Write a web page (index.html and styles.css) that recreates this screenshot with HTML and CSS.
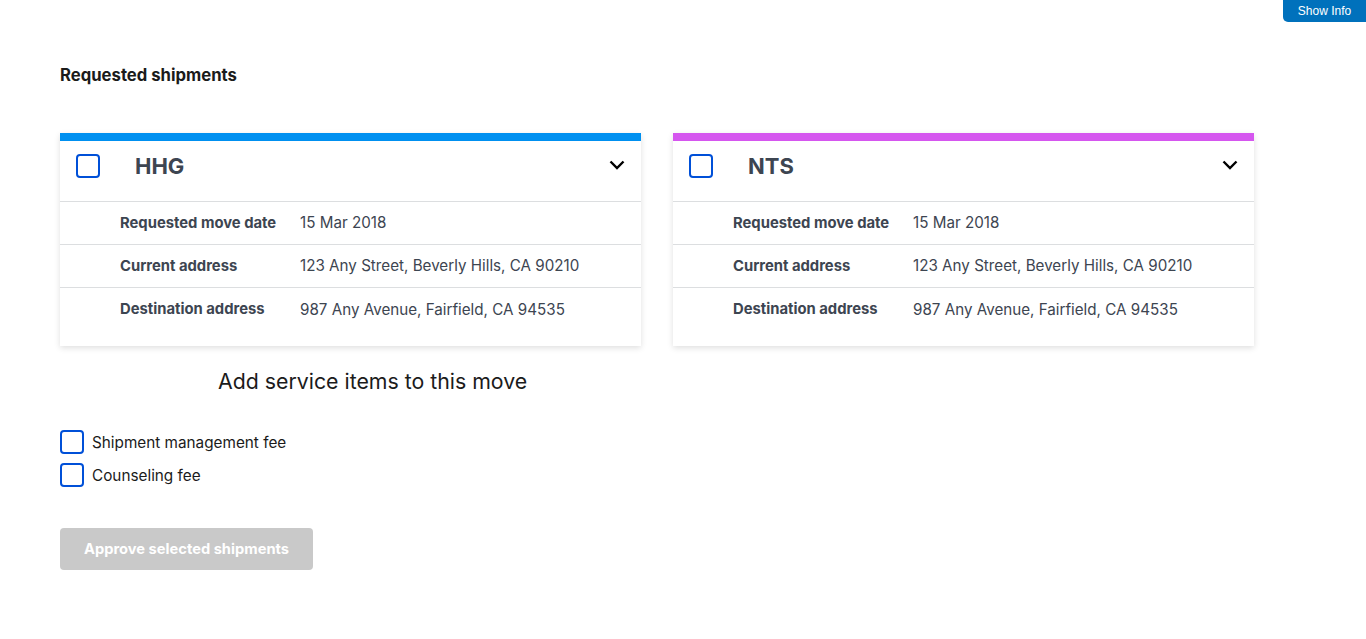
FILE: index.html
```html
<!DOCTYPE html>
<html>
<head>
<meta charset="utf-8">
<link rel="stylesheet" href="styles.css">
</head>
<body>
<button class="show-info">Show Info</button>
<main class="page">
  <h2 class="title">Requested shipments</h2>
  <div class="cards">
    <section class="card card-hhg">
      <div class="card-head">
        <span class="box"></span>
        <span class="card-name">HHG</span>
        <svg class="chev" width="16" height="10" viewBox="0 0 16 10"><path d="M1.5 1.5 L8 8 L14.5 1.5" fill="none" stroke="#000" stroke-width="2.4"/></svg>
      </div>
      <dl class="rows">
        <div class="row"><dt>Requested move date</dt><dd>15 Mar 2018</dd></div>
        <div class="row"><dt>Current address</dt><dd>123 Any Street, Beverly Hills, CA 90210</dd></div>
        <div class="row"><dt>Destination address</dt><dd>987 Any Avenue, Fairfield, CA 94535</dd></div>
      </dl>
    </section>
    <section class="card card-nts">
      <div class="card-head">
        <span class="box"></span>
        <span class="card-name">NTS</span>
        <svg class="chev" width="16" height="10" viewBox="0 0 16 10"><path d="M1.5 1.5 L8 8 L14.5 1.5" fill="none" stroke="#000" stroke-width="2.4"/></svg>
      </div>
      <dl class="rows">
        <div class="row"><dt>Requested move date</dt><dd>15 Mar 2018</dd></div>
        <div class="row"><dt>Current address</dt><dd>123 Any Street, Beverly Hills, CA 90210</dd></div>
        <div class="row"><dt>Destination address</dt><dd>987 Any Avenue, Fairfield, CA 94535</dd></div>
      </dl>
    </section>
  </div>
  <h3 class="sub">Add service items to this move</h3>
  <div class="checks">
    <label class="check"><span class="box"></span>Shipment management fee</label>
    <label class="check"><span class="box"></span>Counseling fee</label>
  </div>
  <button class="approve">Approve selected shipments</button>
</main>
</body>
</html>
```
FILE: styles.css
```css
* { box-sizing: border-box; }
body {
  margin: 0;
  font-family: "Inter", "Noto Sans", sans-serif;
  color: #1b1b1b;
  background: #fff;
}
.show-info {
  position: absolute;
  top: 0;
  right: 0;
  width: 83px;
  height: 22px;
  border: 0;
  border-radius: 0 0 0 5px;
  background: #0071bc;
  color: #fff;
  font-family: "Liberation Sans", Arial, sans-serif;
  font-size: 12px;
  padding: 0;
}
.page {
  padding: 64px 60px 0;
}
.title {
  margin: 0;
  font-size: 16.7px;
  font-weight: 700;
  line-height: 22px;
}
.cards {
  display: flex;
  gap: 32px;
  margin-top: 47px;
}
.card {
  width: 581px;
  background: #fff;
  border-top: 8px solid #0090f0;
  box-shadow: 0 2px 6px rgba(0,0,0,0.13);
}
.card-nts { border-top-color: #d556ef; }
.card-head {
  height: 61px;
  display: flex;
  align-items: center;
  padding: 0 16px;
  border-bottom: 1px solid #dcdee0;
}
.box {
  width: 24px;
  height: 24px;
  border: 2px solid #0050d8;
  border-radius: 4px;
  flex: none;
}
.card-head .box { margin-top: -10px; }
.card-name {
  margin-left: 35px;
  font-size: 22px;
  font-weight: 700;
  color: #3d4551;
  flex: 1;
  margin-top: -10px;
}
.chev { margin-top: -12px; }
.rows {
  margin: 0;
  padding: 0 0 15px;
}
.row {
  display: flex;
  height: 43px;
  align-items: center;
  padding-left: 60px;
  padding-bottom: 1px;
  border-bottom: 1px solid #dcdee0;
  font-size: 15px;
  color: #3d4551;
}
.row:last-child { border-bottom: 0; }
.row dt {
  width: 180px;
  font-weight: 700;
  font-size: 14.8px;
}
.row dd { margin: 0; font-size: 15.2px; }
.sub {
  margin: 20px 0 0;
  padding-left: 158px;
  font-size: 21.3px;
  font-weight: 400;
  line-height: 30px;
}
.checks {
  margin-top: 34px;
  display: flex;
  flex-direction: column;
  gap: 9px;
}
.check {
  display: flex;
  align-items: center;
  gap: 8px;
  font-size: 15.3px;
}
.approve {
  margin-top: 41px;
  width: 253px;
  height: 42px;
  border: 0;
  border-radius: 4px;
  background: #c9c9c9;
  color: #fff;
  font-family: inherit;
  font-size: 14.7px;
  font-weight: 700;
}
```
